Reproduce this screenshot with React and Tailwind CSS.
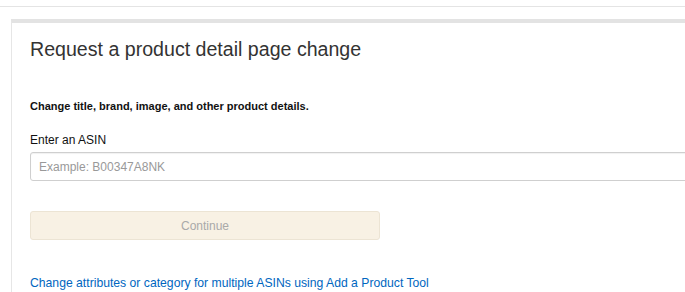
import React from "react";

export default function App() {
  return (
    <div
      className="w-[685px] h-[292px] overflow-hidden bg-white"
      style={{ fontFamily: '"Liberation Sans", Arial, sans-serif' }}
    >
      <div className="h-[6px]" />
      <div className="h-px bg-[#e4e4e4]" />
      <div className="ml-[11px] mt-[12px] w-[720px] border-t-4 border-l border-[#e3e3e3] border-l-[#e6e6e6] pl-[18px] pt-[12px]">
        <h1 className="text-[19.6px] leading-[28px] text-[#333]">
          Request a product detail page change
        </h1>
        <p className="mt-[36px] text-[11px] leading-[14px] font-bold text-[#111]">
          Change title, brand, image, and other product details.
        </p>
        <p className="mt-[20px] text-[12px] leading-[14px] text-[#111]">Enter an ASIN</p>
        <div className="mt-[5px] h-[29px] w-[680px] border border-[#cfcfcf] rounded-[3px] flex items-center px-[8px] shadow-[inset_0_1px_1px_rgba(0,0,0,0.06)]">
          <span className="text-[12px] text-[#999]">Example: B00347A8NK</span>
        </div>
        <div className="mt-[30px] h-[29px] w-[350px] rounded-[3px] border border-[#ece4d4] bg-[#f8f1e4] flex items-center justify-center">
          <span className="text-[12px] text-[#a9a9a9]">Continue</span>
        </div>
        <div className="mt-[36px] text-[12.2px] leading-[14px] text-[#0066c0]">
          Change attributes or category for multiple ASINs using Add a Product Tool
        </div>
        <div className="mt-[2px] ml-[430px] text-[11px] leading-[14px] text-[#bbb]">
          Learn the Catalog style guide requirements
        </div>
      </div>
    </div>
  );
}
